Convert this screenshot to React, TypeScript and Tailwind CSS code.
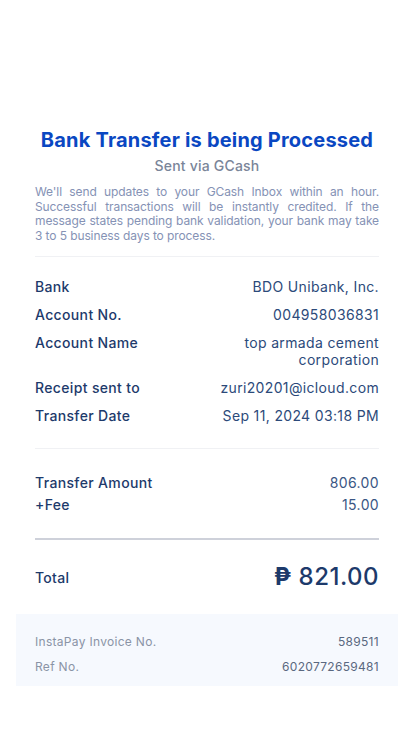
import React from 'react';

const details = [
  { label: 'Bank', value: 'BDO Unibank, Inc.' },
  { label: 'Account No.', value: '004958036831' },
  { label: 'Account Name', value: 'top armada cement corporation' },
  { label: 'Receipt sent to', value: 'zuri20201@icloud.com' },
  { label: 'Transfer Date', value: 'Sep 11, 2024 03:18 PM' },
];

const App = () => {
  return (
    <div className="min-h-[736px] bg-white font-['Inter',sans-serif] pt-[128px]">
      <div className="px-[35px]">
        <h1 className="text-center text-[20px] leading-[24px] font-bold text-[#0a47c2] tracking-[0.2px]">
          Bank Transfer is being Processed
        </h1>
        <p className="text-center text-[14px] leading-[20px] text-[#7a8599] font-medium mt-[4px] tracking-[0.2px]">
          Sent via GCash
        </p>
        <p className="text-justify text-[12px] leading-[14.5px] text-[#8592b5] mt-[9px] tracking-[-0.1px]">
          We'll send updates to your GCash Inbox within an hour. Successful transactions will be instantly credited. If
          the message states pending bank validation, your bank may take 3 to 5 business days to process.
        </p>
        <div className="h-px bg-[#f0f1f4] mt-[13px]" />

        <div className="flex flex-col gap-[11px] pt-[21px] pb-[24px] text-[14px] leading-[17px] text-[#1d3a6b] tracking-[0.35px]">
          {details.map((d) => (
            <div key={d.label} className="flex justify-between gap-4">
              <span className="font-medium whitespace-nowrap">{d.label}</span>
              <span className="text-right max-w-[170px] text-[#2c4a7a]">{d.value}</span>
            </div>
          ))}
        </div>
        <div className="h-px bg-[#f0f1f4]" />

        <div className="flex flex-col gap-[4px] pt-[25px] pb-[24px] text-[14px] leading-[18px] text-[#1d3a6b] tracking-[0.35px]">
          <div className="flex justify-between">
            <span className="font-medium">Transfer Amount</span>
            <span className="text-[#3a5684]">806.00</span>
          </div>
          <div className="flex justify-between">
            <span className="font-medium">+Fee</span>
            <span className="text-[#3a5684]">15.00</span>
          </div>
        </div>
        <div className="h-[2px] bg-[#ced1da]" />

        <div className="flex justify-between items-center pt-[22px] pb-[22px] text-[#1d3a6b] tracking-[0.3px]">
          <span className="text-[14px] font-medium">Total</span>
          <span className="text-[24px] leading-[30px] font-medium tracking-[0.5px]">
            <span className="font-bold">₱</span> 821.00
          </span>
        </div>
      </div>

      <div className="mx-[16px] bg-[#f6f9fe] px-[19px] pt-[19px] pb-[10px] flex flex-col gap-[7px] text-[12px] leading-[18px] text-[#8a94a6] tracking-[0.3px]">
        <div className="flex justify-between">
          <span>InstaPay Invoice No.</span>
          <span className="text-[#5a6880]">589511</span>
        </div>
        <div className="flex justify-between">
          <span>Ref No.</span>
          <span className="text-[#5a6880]">6020772659481</span>
        </div>
      </div>
    </div>
  );
};

export default App;
